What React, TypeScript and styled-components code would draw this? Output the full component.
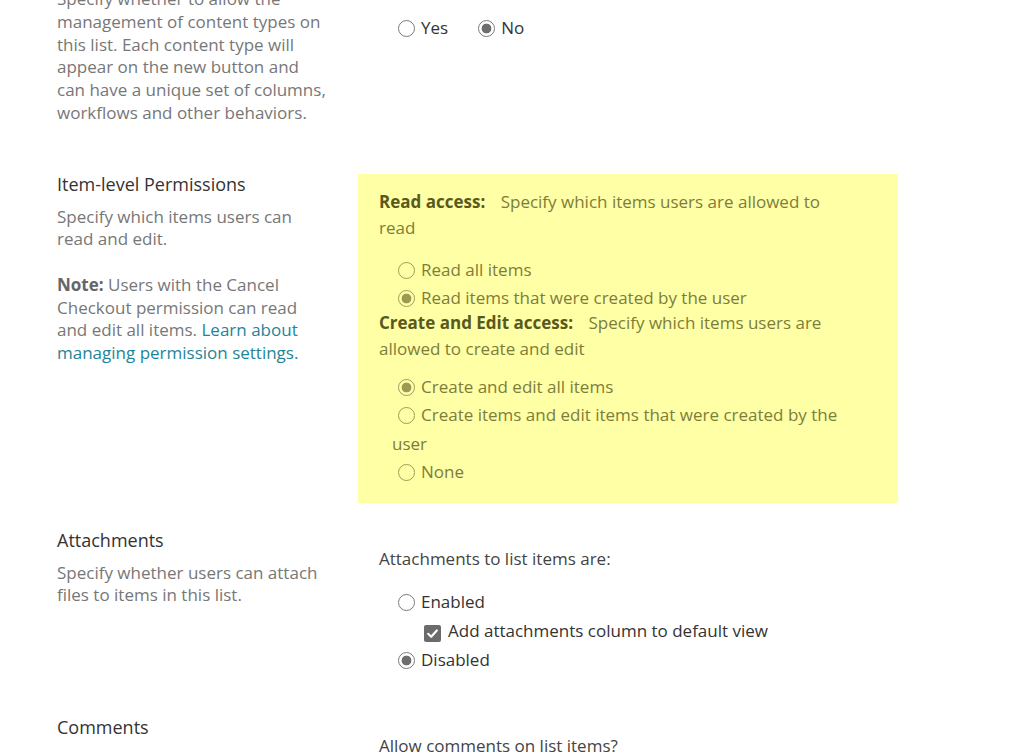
import React from "react";
import styled, { createGlobalStyle } from "styled-components";

const GlobalStyle = createGlobalStyle`
  body {
    margin: 0;
    background: #fff;
    font-family: "Open Sans", "Liberation Sans", sans-serif;
    font-size: 17px;
  }
`;

type Tone = "plain" | "olive";

const Page = styled.div`
  margin-top: -46px;
  padding-left: 57px;
  width: 841px;
`;

const Section = styled.section`
  display: grid;
  grid-template-columns: 270px 1fr;
  column-gap: 52px;
  align-items: start;
  padding-bottom: 41px;
`;

const LeftCol = styled.div`
  padding-bottom: 6px;
`;

const Title = styled.h3`
  margin: 0;
  font-size: 18px;
  font-weight: 400;
  line-height: 24px;
  color: #333;
`;

const Desc = styled.p<{ $gap?: number }>`
  margin: ${({ $gap }) => $gap ?? 10}px 0 0;
  line-height: 22.75px;
  color: #777;

  b {
    color: #666;
    font-weight: 700;
  }
`;

const Link = styled.a`
  color: #1d8597;
  text-decoration: none;
`;

const RightCol = styled.div`
  padding-top: 20.5px;
`;

const Question = styled.div`
  line-height: 22.75px;
  color: #444;
`;

const Highlight = styled.div`
  background: #ffffa6;
  margin: -18px 0 -16px -21px;
  padding: 15px 40px 16px 21px;
  color: #7d7d3a;
`;

const AccessHead = styled.div<{ $top?: number }>`
  margin-top: ${({ $top }) => $top ?? 0}px;
  margin-right: 14px;
  line-height: 26px;

  strong {
    color: #59591c;
    font-weight: 700;
    margin-right: 11px;
  }
`;

const OptionList = styled.div<{ $top: number }>`
  margin-top: ${({ $top }) => $top}px;
`;

const Option = styled.div<{ $tone?: Tone; $inline?: boolean }>`
  display: ${({ $inline }) => ($inline ? "inline-block" : "block")};
  padding-left: ${({ $inline }) => ($inline ? "0" : "13px")};
  margin-right: ${({ $inline }) => ($inline ? "24px" : "0")};
  line-height: ${({ $tone }) => ($tone === "olive" ? "28.5px" : "29px")};
  color: ${({ $tone }) => ($tone === "olive" ? "#7d7d3a" : "#333")};

  &:first-child {
    margin-left: ${({ $inline }) => ($inline ? "13px" : "0")};
  }
`;

const Radio = styled.span<{ $checked?: boolean; $tone?: Tone }>`
  display: inline-block;
  box-sizing: border-box;
  width: 17px;
  height: 17px;
  margin: 0 6px 0 6px;
  vertical-align: -3px;
  border-radius: 50%;
  border: 1px solid ${({ $tone }) => ($tone === "olive" ? "#9c9c5e" : "#7a7a7a")};
  background: ${({ $checked, $tone }) =>
    $checked
      ? `radial-gradient(circle, ${$tone === "olive" ? "#9a9a52" : "#6e6e6e"} 0 4.6px, ${
          $tone === "olive" ? "#ffffa6" : "#fff"
        } 5.2px)`
      : "transparent"};
`;

const Checkbox = styled.span`
  display: inline-flex;
  align-items: center;
  justify-content: center;
  width: 17px;
  height: 17px;
  margin: 0 7px 0 32px;
  vertical-align: -3px;
  border-radius: 2px;
  background: #6b6b6b;
`;

const Check = () => (
  <svg width="13" height="13" viewBox="0 0 12 12">
    <path d="M2 6.3 L4.8 9 L10 3.2" fill="none" stroke="#fff" strokeWidth="2" strokeLinecap="round" strokeLinejoin="round" />
  </svg>
);

export default function App() {
  return (
    <>
      <GlobalStyle />
      <Page>
        <Section>
          <LeftCol>
            <Title>Content Types</Title>
            <Desc>
              Specify whether to allow the management of content types on this list. Each content type will
              appear on the new button and can have a unique set of columns, workflows and other behaviors.
            </Desc>
          </LeftCol>
          <RightCol>
            <Question>Allow management of content types?</Question>
            <OptionList $top={16}>
              <Option $inline>
                <Radio />
                Yes
              </Option>
              <Option $inline>
                <Radio $checked />
                No
              </Option>
            </OptionList>
          </RightCol>
        </Section>

        <Section>
          <LeftCol>
            <Title>Item-level Permissions</Title>
            <Desc>Specify which items users can read and edit.</Desc>
            <Desc $gap={22.75}>
              <b>Note:</b> Users with the Cancel Checkout permission can read and edit all items.{" "}
              <Link href="#">Learn about managing permission settings.</Link>
            </Desc>
          </LeftCol>
          <RightCol>
            <Highlight>
              <AccessHead>
                <strong>Read access:</strong> Specify which items users are allowed to read
              </AccessHead>
              <OptionList $top={14.5}>
                <Option $tone="olive">
                  <Radio $tone="olive" />
                  Read all items
                </Option>
                <Option $tone="olive">
                  <Radio $tone="olive" $checked />
                  Read items that were created by the user
                </Option>
              </OptionList>
              <AccessHead $top={-3}>
                <strong>Create and Edit access:</strong> Specify which items users are allowed to create and edit
              </AccessHead>
              <OptionList $top={11}>
                <Option $tone="olive">
                  <Radio $tone="olive" $checked />
                  Create and edit all items
                </Option>
                <Option $tone="olive">
                  <Radio $tone="olive" />
                  Create items and edit items that were created by the user
                </Option>
                <Option $tone="olive">
                  <Radio $tone="olive" />
                  None
                </Option>
              </OptionList>
            </Highlight>
          </RightCol>
        </Section>

        <Section>
          <LeftCol>
            <Title>Attachments</Title>
            <Desc>Specify whether users can attach files to items in this list.</Desc>
          </LeftCol>
          <RightCol>
            <Question>Attachments to list items are:</Question>
            <OptionList $top={16}>
              <Option>
                <Radio />
                Enabled
              </Option>
              <Option>
                <Checkbox>
                  <Check />
                </Checkbox>
                Add attachments column to default view
              </Option>
              <Option>
                <Radio $checked />
                Disabled
              </Option>
            </OptionList>
          </RightCol>
        </Section>

        <Section>
          <LeftCol>
            <Title>Comments</Title>
            <Desc>Specify whether users can add comments to items in this list.</Desc>
          </LeftCol>
          <RightCol>
            <Question>Allow comments on list items?</Question>
            <OptionList $top={16}>
              <Option $inline>
                <Radio $checked />
                Yes
              </Option>
              <Option $inline>
                <Radio />
                No
              </Option>
            </OptionList>
          </RightCol>
        </Section>
      </Page>
    </>
  );
}
